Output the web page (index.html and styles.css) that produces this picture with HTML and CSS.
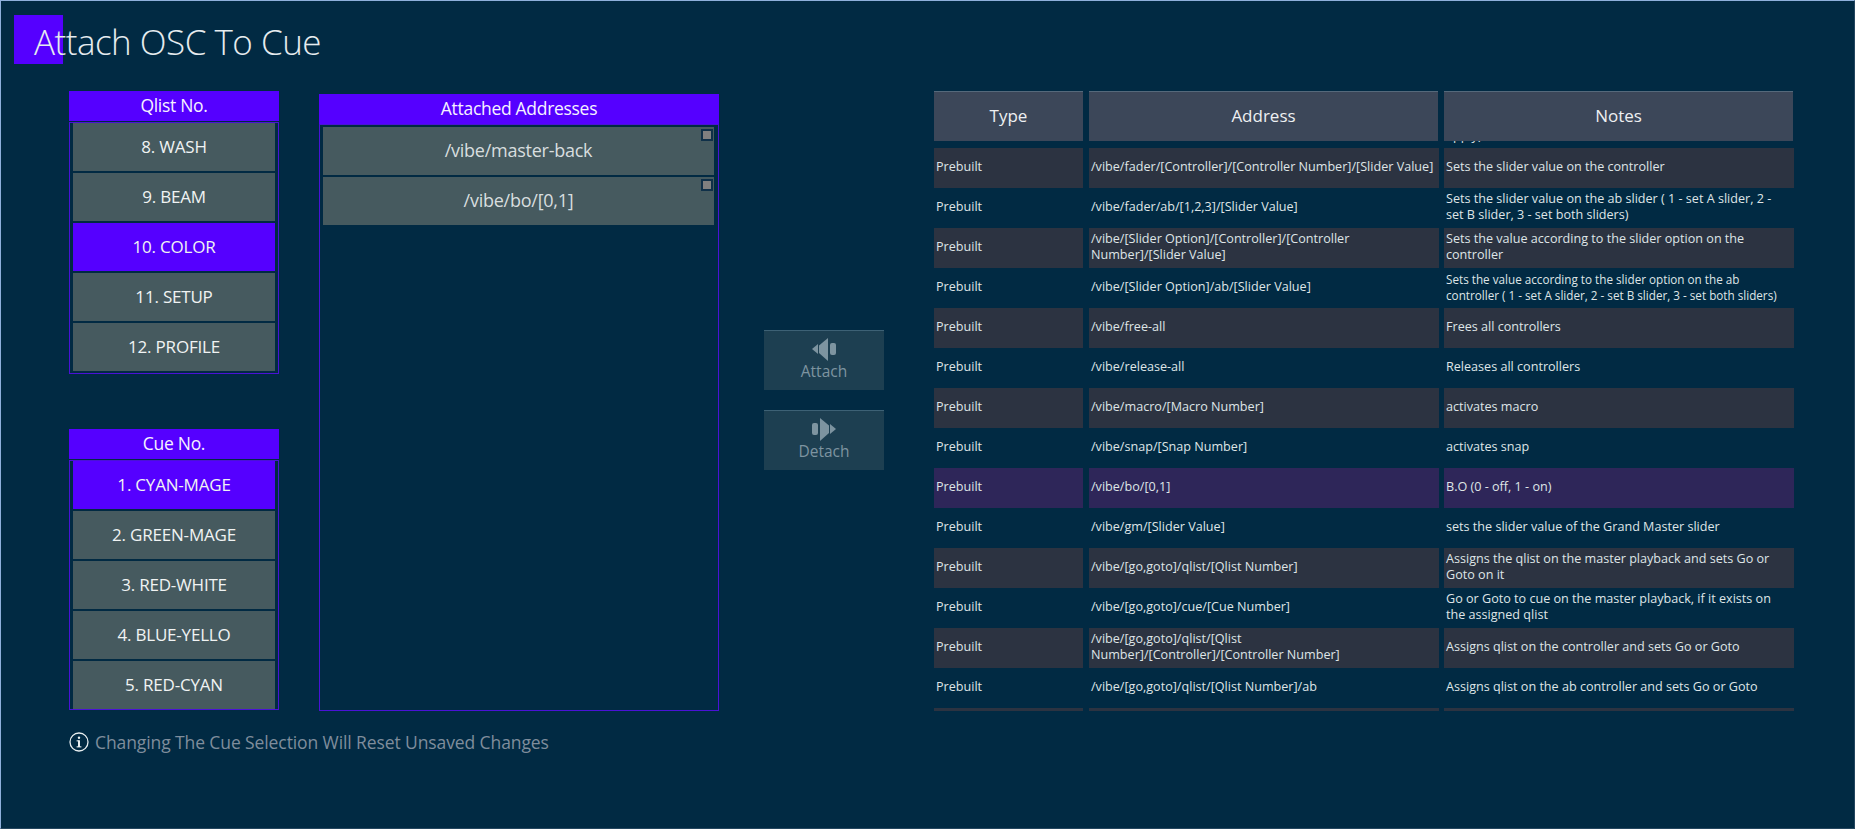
FILE: index.html
```html
<!DOCTYPE html>
<html lang="en">
<head>
<meta charset="utf-8">
<title>Attach OSC To Cue</title>
<link rel="stylesheet" href="styles.css">
</head>
<body>
<div class="window">
  <header class="title-bar">
    <span class="title-mark"></span>
    <h1 class="title">Attach OSC To Cue</h1>
  </header>
  <main class="content">
    <section class="left">
      <div class="pickers">
        <div class="column">
          <div class="panel qlist">
            <div class="panel-head">Qlist No.</div>
            <div class="panel-list">
              <div class="item">8. WASH</div>
              <div class="item">9. BEAM</div>
              <div class="item active">10. COLOR</div>
              <div class="item">11. SETUP</div>
              <div class="item">12. PROFILE</div>
            </div>
          </div>
          <div class="panel cues">
            <div class="panel-head">Cue No.</div>
            <div class="panel-list">
              <div class="item active">1. CYAN-MAGE</div>
              <div class="item">2. GREEN-MAGE</div>
              <div class="item">3. RED-WHITE</div>
              <div class="item">4. BLUE-YELLO</div>
              <div class="item">5. RED-CYAN</div>
            </div>
          </div>
        </div>
        <div class="panel attached">
          <div class="panel-head">Attached Addresses</div>
          <div class="panel-list wide">
            <div class="item dim"><span>/vibe/master-back</span><i class="check"></i></div>
            <div class="item dim"><span>/vibe/bo/[0,1]</span><i class="check"></i></div>
          </div>
        </div>
      </div>
      <p class="note">
        <svg class="note-icon" viewBox="0 0 20 20" width="20" height="20"><circle cx="10" cy="10" r="9" fill="none" stroke="#e8eef0" stroke-width="1.3"/><rect x="9" y="8.5" width="2" height="6.5" fill="#e8eef0"/><rect x="7.6" y="8.3" width="3" height="1.1" fill="#e8eef0"/><rect x="7.6" y="14.3" width="4.8" height="1.1" fill="#e8eef0"/><circle cx="10" cy="5.8" r="1.2" fill="#e8eef0"/></svg>
        <span>Changing The Cue Selection Will Reset Unsaved Changes</span>
      </p>
    </section>
    <section class="actions">
      <button class="action">
        <svg viewBox="0 0 24 24" width="24" height="24"><path d="M0 12 6 7V17Z"/><path d="M7 8.5 16 1V24L7 16Z"/><rect x="18" y="6" width="6" height="12" rx="2"/></svg>
        <span>Attach</span>
      </button>
      <button class="action">
        <svg viewBox="0 0 24 24" width="24" height="24"><rect x="0" y="6" width="6" height="12" rx="2"/><path d="M8 1 17 8.5V16L8 24Z"/><path d="M24 12 18 7V17Z"/></svg>
        <span>Detach</span>
      </button>
    </section>
    <section class="table">
      <div class="thead">
        <div>Type</div><div>Address</div><div>Notes</div>
      </div>
      <div class="tbody">
        <div class="rows">
          <div class="row plain clipped-end"><div></div><div></div><div>apply)</div></div>
          <div class="row shade"><div>Prebuilt</div><div>/vibe/fader/[Controller]/[Controller Number]/[Slider Value]</div><div>Sets the slider value on the controller</div></div>
          <div class="row plain"><div>Prebuilt</div><div>/vibe/fader/ab/[1,2,3]/[Slider Value]</div><div>Sets the slider value on the ab slider ( 1 - set A slider, 2 - set B slider, 3 - set both sliders)</div></div>
          <div class="row shade"><div>Prebuilt</div><div>/vibe/[Slider Option]/[Controller]/[Controller Number]/[Slider Value]</div><div>Sets the value according to the slider option on the controller</div></div>
          <div class="row plain"><div>Prebuilt</div><div>/vibe/[Slider Option]/ab/[Slider Value]</div><div class="fit">Sets the value according to the slider option on the ab controller ( 1 - set A slider, 2 - set B slider, 3 - set both sliders)</div></div>
          <div class="row shade"><div>Prebuilt</div><div>/vibe/free-all</div><div>Frees all controllers</div></div>
          <div class="row plain"><div>Prebuilt</div><div>/vibe/release-all</div><div>Releases all controllers</div></div>
          <div class="row shade"><div>Prebuilt</div><div>/vibe/macro/[Macro Number]</div><div>activates macro</div></div>
          <div class="row plain"><div>Prebuilt</div><div>/vibe/snap/[Snap Number]</div><div>activates snap</div></div>
          <div class="row selected"><div>Prebuilt</div><div>/vibe/bo/[0,1]</div><div>B.O (0 - off, 1 - on)</div></div>
          <div class="row plain"><div>Prebuilt</div><div>/vibe/gm/[Slider Value]</div><div>sets the slider value of the Grand Master slider</div></div>
          <div class="row shade"><div>Prebuilt</div><div>/vibe/[go,goto]/qlist/[Qlist Number]</div><div>Assigns the qlist on the master playback and sets Go or Goto on it</div></div>
          <div class="row plain"><div>Prebuilt</div><div>/vibe/[go,goto]/cue/[Cue Number]</div><div>Go or Goto to cue on the master playback, if it exists on the assigned qlist</div></div>
          <div class="row shade"><div>Prebuilt</div><div>/vibe/[go,goto]/qlist/[Qlist Number]/[Controller]/[Controller Number]</div><div>Assigns qlist on the controller and sets Go or Goto</div></div>
          <div class="row plain"><div>Prebuilt</div><div>/vibe/[go,goto]/qlist/[Qlist Number]/ab</div><div>Assigns qlist on the ab controller and sets Go or Goto</div></div>
          <div class="row shade"><div></div><div></div><div></div></div>
        </div>
      </div>
    </section>
  </main>
</div>
</body>
</html>
```

FILE: styles.css
```css
* { box-sizing: border-box; }
html, body { margin: 0; height: 100%; overflow: hidden; }
body { background: #012a43; font-family: "Open Sans", "Noto Sans", sans-serif; color: #f2f4f5; }
.window { height: 829px; border: 1px solid #24465f; border-top-color: #8fb0dc; border-left-color: #8fb0dc; }
.title-bar { height: 90px; padding: 14px 0 0 13px; position: relative; }
.title-mark { display: block; width: 49px; height: 49px; background: #5500ff; }
.title { position: absolute; left: 33px; top: 18px; margin: 0; font-size: 35px; line-height: 46px; font-weight: 300; letter-spacing: -.5px; color: #e6ecef; }
.content { display: flex; align-items: flex-start; }
.left { width: 763px; padding-left: 68px; flex: none; }
.pickers { display: flex; gap: 40px; }
.column { width: 210px; display: flex; flex-direction: column; gap: 55px; }
.panel-head { height: 30px; background: #5500ff; text-align: center; font-size: 17.5px; line-height: 28px; letter-spacing: -.3px; color: #f6f2ff; }
.panel-list { margin-top: 1px; border: 1px solid #4a12d6; padding: 0 3px; display: flex; flex-direction: column; gap: 2px; }
.qlist .panel-list { height: 252px; }
.cues .panel-list { height: 250px; overflow: hidden; }
.attached { width: 400px; margin-top: 3px; }
.attached .panel-list { margin-top: 0; height: 587px; padding-top: 2px; padding-right: 4px; }
.item { flex: none; height: 48px; padding-bottom: 2px; background: #465a5f; display: flex; align-items: center; justify-content: center; font-size: 17px; letter-spacing: -.2px; color: #f0f3f3; position: relative; }
.item.active { background: #5500ff; }
.item.dim { color: #d8dedf; font-size: 18px; letter-spacing: -.25px; }
.check { position: absolute; top: 2px; right: 1px; width: 12px; height: 12px; background: #808080; border: 2.5px solid #0f3049; }
.note { margin: 19px 0 0; display: flex; align-items: center; gap: 6px; font-size: 17.5px; letter-spacing: -.1px; color: #7f8d9c; height: 24px; }
.note-icon { flex: none; }
.actions { width: 120px; margin-top: 239px; flex: none; display: flex; flex-direction: column; gap: 20px; }
.action { height: 60px; width: 120px; padding: 6px 0 0; border: 0; border-top: 1px solid #3d6175; background: #1d3f51; color: #7d94a0; font: inherit; font-size: 15.5px; display: flex; flex-direction: column; align-items: center; gap: 0; line-height: 20px; }
.action svg { fill: #7d94a0; flex: none; }
.table { margin-left: 50px; width: 860px; flex: none; font-size: 12.6px; color: #dfe5e7; }
.thead { display: grid; grid-template-columns: 149px 349px 349px; column-gap: 6px; height: 50px; }
.thead div { background: #3c4759; border-top: 1px solid #55697b; padding-bottom: 3px; display: flex; align-items: center; justify-content: center; font-size: 17px; color: #eef0f2; }
.tbody { height: 570px; overflow: hidden; }
.rows { margin-top: -33px; }
.row { display: grid; grid-template-columns: 149px 356px 355px; height: 40px; }
.row > div { display: flex; align-items: center; padding: 0 4px 2px 2px; line-height: 16.5px; }
.row > div:nth-child(2) { margin-left: 6px; }
.row > div:nth-child(3) { margin-left: 5px; }
.row > div.fit { font-size: 11.7px; line-height: 16px; }
.row.clipped-end > div { align-items: flex-end; padding-bottom: 3.5px; }
.row.shade > div { background: #2c3341; }
.row.selected > div { background: #2e2659; }
```
